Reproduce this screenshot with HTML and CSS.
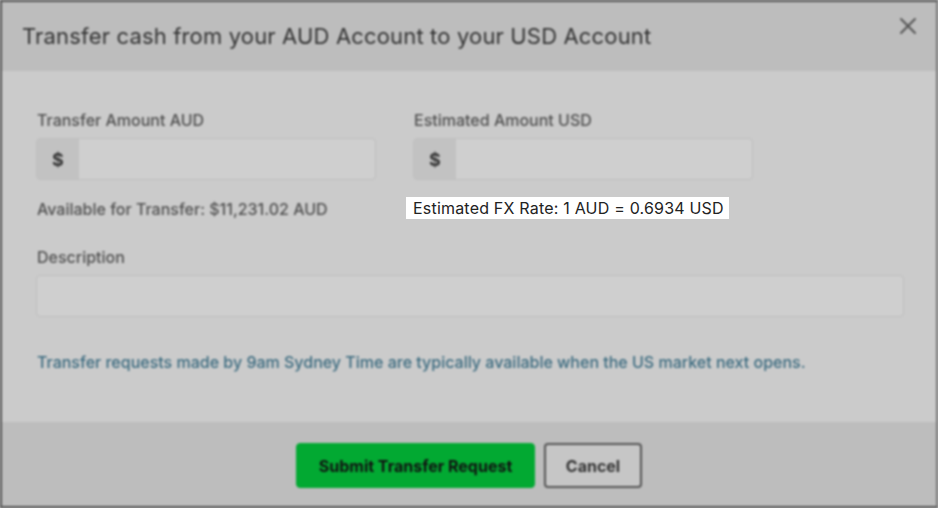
FILE: index.html
```html
<!DOCTYPE html>
<html lang="en">
<head>
<meta charset="utf-8">
<title>Transfer cash</title>
<link rel="stylesheet" href="styles.css">
</head>
<body>
<div class="stage">
  <div class="modal">
    <header class="modal-header">
      <h1 class="modal-title">Transfer cash from your AUD Account to your USD Account</h1>
      <svg class="close" width="18" height="18" viewBox="0 0 18 18" aria-hidden="true">
        <path d="M2 2 L16 16 M16 2 L2 16" stroke="#555" stroke-width="2" stroke-linecap="round" fill="none"/>
      </svg>
    </header>
    <main class="modal-body">
      <div class="field-grid">
        <div class="field">
          <label class="label">Transfer Amount AUD</label>
          <div class="input-group">
            <span class="addon">$</span>
            <span class="input"></span>
          </div>
          <p class="hint">Available for Transfer: $11,231.02 AUD</p>
        </div>
        <div class="field">
          <label class="label">Estimated Amount USD</label>
          <div class="input-group">
            <span class="addon">$</span>
            <span class="input"></span>
          </div>
          <p class="hint hint-hidden">Estimated FX Rate: 1 AUD = 0.6934 USD</p>
        </div>
      </div>
      <div class="field desc-field">
        <label class="label">Description</label>
        <div class="input-group">
          <span class="input"></span>
        </div>
      </div>
      <p class="notice">Transfer requests made by 9am Sydney Time are typically available when the US market next opens.</p>
    </main>
    <footer class="modal-footer">
      <button class="btn btn-primary">Submit Transfer Request</button>
      <button class="btn btn-secondary">Cancel</button>
    </footer>
  </div>
  <div class="spotlight">Estimated FX Rate: 1 AUD = 0.6934 USD</div>
</div>
</body>
</html>
```
FILE: styles.css
```css
* { box-sizing: border-box; }
html, body { margin: 0; padding: 0; }
body {
  width: 938px;
  height: 508px;
  overflow: hidden;
  background: #bdbdbd;
  font-family: Inter, "Noto Sans", "Liberation Sans", sans-serif;
}
.stage {
  position: relative;
  width: 938px;
  height: 508px;
}
.modal {
  width: 938px;
  height: 508px;
  border: 2px solid #555;
  border-right-color: #777;
  display: flex;
  flex-direction: column;
  background: #cbcbcb;
  filter: blur(0.9px);
}
.modal-header {
  height: 69px;
  background: #bdbdbd;
  display: flex;
  justify-content: space-between;
  align-items: flex-start;
  padding: 0 19px 0 20px;
}
.modal-title {
  margin: 20px 0 0;
  font-size: 22px;
  font-weight: 400;
  line-height: 28px;
  color: #333;
  letter-spacing: 0.16px;
}
.close {
  margin-top: 15px;
}
.modal-body {
  flex: 1;
  padding: 39px 32px 0 34px;
}
.field-grid {
  display: grid;
  grid-template-columns: 340px 340px;
  column-gap: 37px;
}
.label {
  display: block;
  font-size: 16px;
  line-height: 20px;
  font-weight: 500;
  color: #505050;
  padding-left: 1px;
}
.input-group {
  margin-top: 8px;
  height: 42px;
  display: flex;
  border: 1px solid #bebebe;
  border-radius: 4px;
  background: #cfcfcf;
  overflow: hidden;
}
.addon {
  width: 42px;
  background: #c2c2c2;
  display: flex;
  align-items: center;
  justify-content: center;
  font-size: 18px;
  font-weight: 700;
  color: #333;
}
.input { flex: 1; }
.hint {
  margin: 19px 0 0;
  padding-left: 1px;
  font-size: 16px;
  line-height: 20px;
  font-weight: 500;
  color: #505050;
}
.hint-hidden { visibility: hidden; }
.desc-field { margin-top: 28px; }
.notice {
  margin: 35px 0 0;
  padding-left: 1px;
  font-size: 16px;
  line-height: 20px;
  font-weight: 500;
  color: #3a6a7f;
}
.modal-footer {
  height: 84px;
  background: #bdbdbd;
  display: flex;
  justify-content: center;
  align-items: flex-start;
  gap: 9px;
  padding-top: 21px;
}
.btn {
  height: 45px;
  font-family: inherit;
  font-size: 16px;
  font-weight: 700;
  border-radius: 4px;
  cursor: pointer;
}
.btn-primary {
  width: 239px;
  background: #02a932;
  border: 1px solid #02a932;
  color: #111;
}
.btn-secondary {
  width: 98px;
  background: #c6c6c6;
  border: 2px solid #555;
  color: #333;
}
.spotlight {
  position: absolute;
  left: 406px;
  top: 197px;
  width: 323px;
  height: 22px;
  background: #fff;
  color: #222;
  font-size: 16px;
  letter-spacing: 0.2px;
  line-height: 22px;
  padding-left: 7px;
  white-space: nowrap;
}
```
